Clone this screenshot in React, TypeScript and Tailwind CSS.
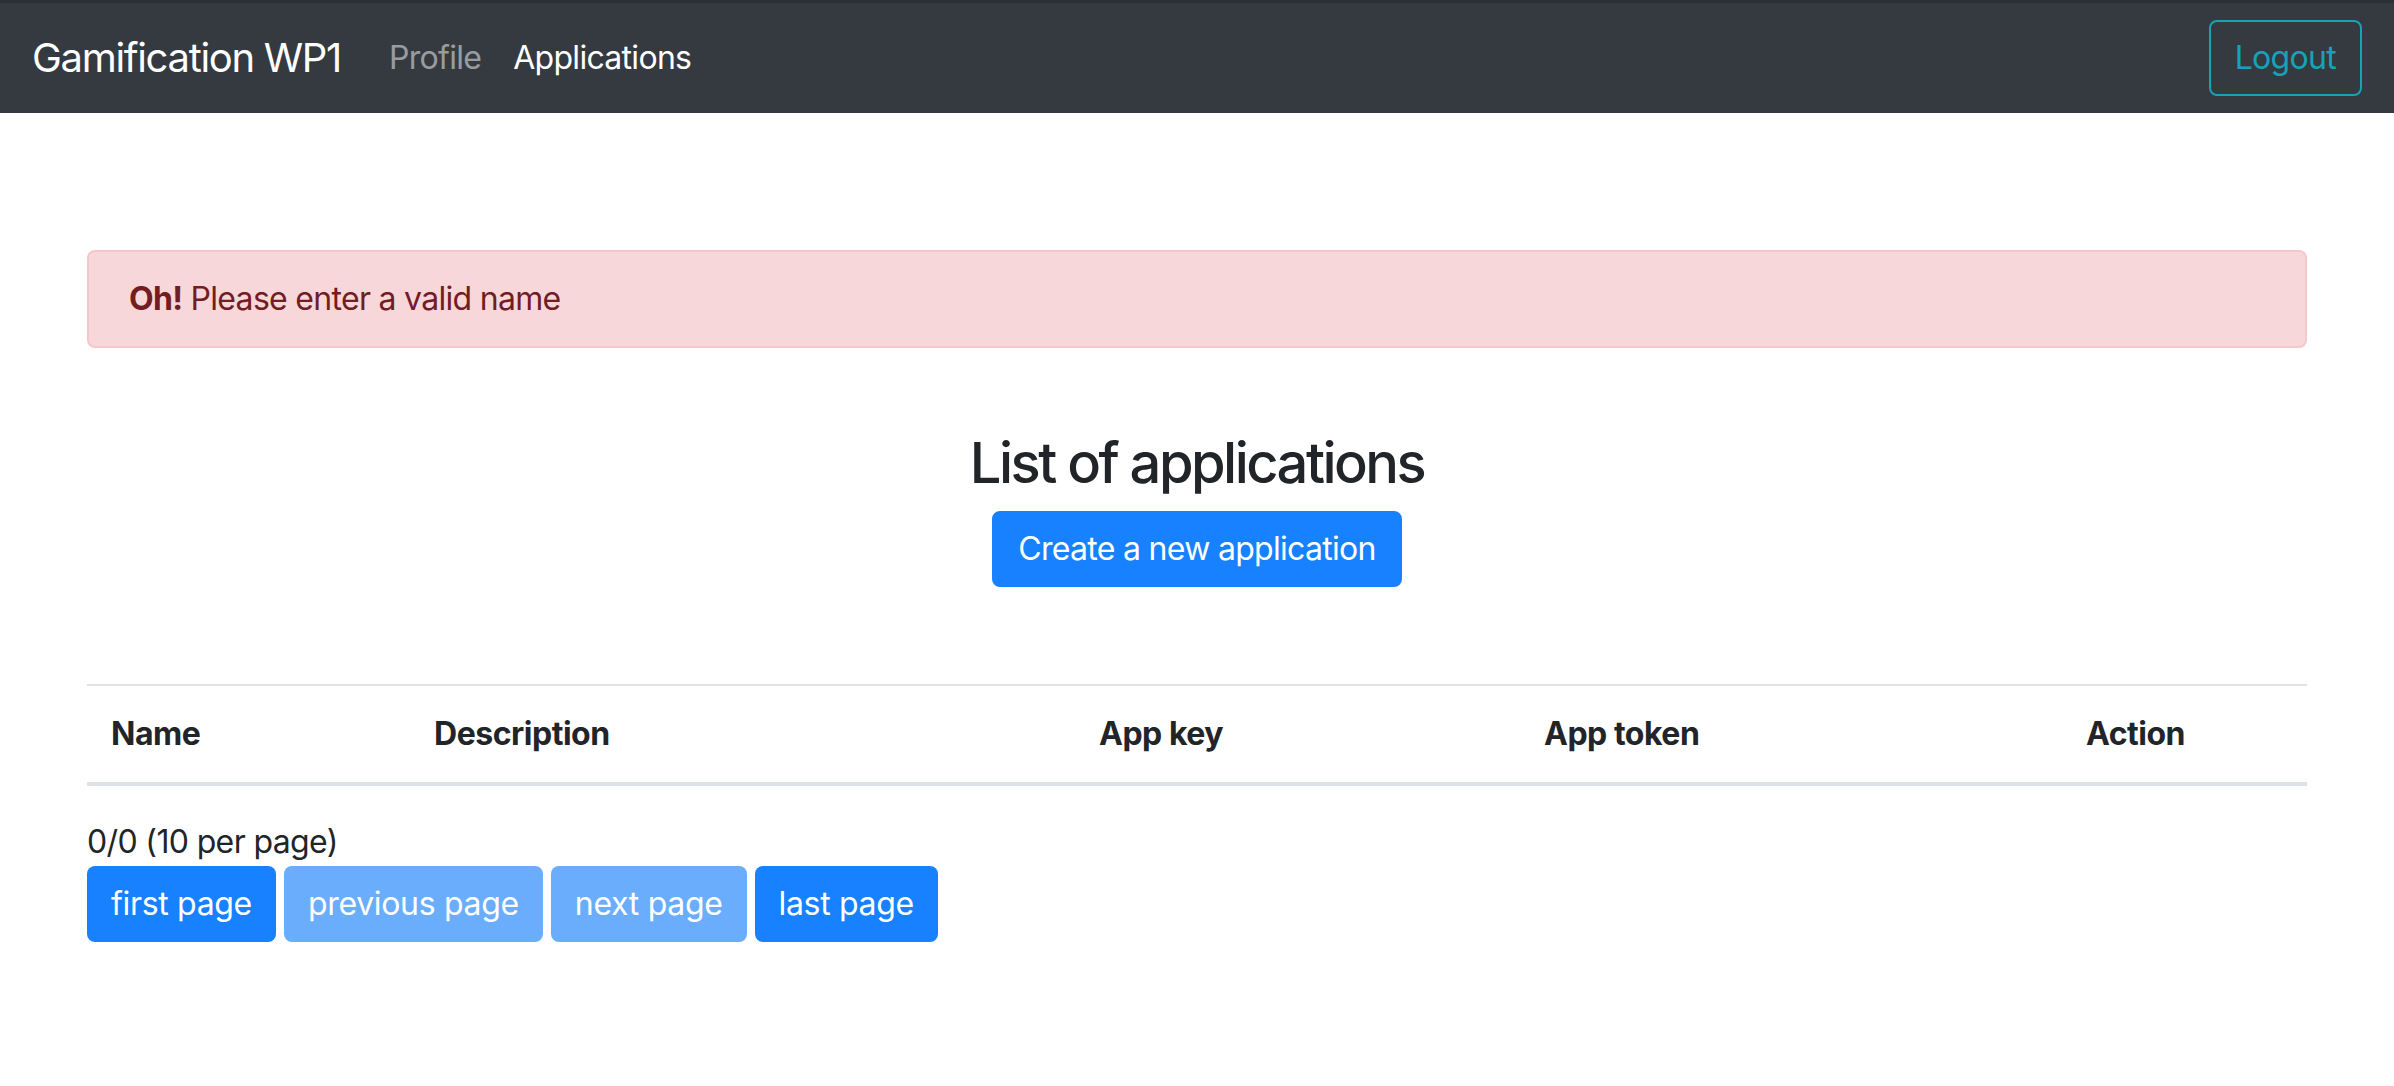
import React from "react";

export default function App() {
  const font = { fontFamily: "Inter, 'Noto Sans', sans-serif" };
  const btn = "h-[76px] rounded-[8px] px-[24px] text-[32px] leading-[48px] tracking-[-0.022em] text-white";
  const pbtn = "h-[76px] rounded-[8px] px-[24px] text-[32px] leading-[48px] tracking-[-0.01em] text-white";
  return (
    <div className="min-h-[1086px] bg-white text-[#212529]" style={font}>
      {/* Navbar */}
      <nav className="relative flex h-[113px] items-center bg-[#343a40] px-[32px] pt-[3px]">
        <div className="absolute left-0 right-0 top-0 h-[3px] bg-[#2b2f34]" />
        <a className="mr-[32px] py-[10px] text-[40px] leading-[60px] tracking-[-0.033em] text-white">Gamification WP1</a>
        <div className="flex items-center">
          <a className="px-[16px] text-[32px] leading-[48px] tracking-[-0.022em] text-white/50">Profile</a>
          <a className="px-[16px] text-[32px] leading-[48px] tracking-[-0.022em] text-white">Applications</a>
        </div>
        <div className="ml-auto">
          <button className="h-[76px] rounded-[8px] border-2 border-[#17a2b8] px-[24px] text-[32px] leading-[48px] tracking-[-0.022em] text-[#17a2b8]">
            Logout
          </button>
        </div>
      </nav>

      {/* Content */}
      <div className="mx-auto w-[2280px] px-[30px] pt-[137px]">
        <div className="flex h-[98px] items-center rounded-[8px] border-2 border-[#f5c6cb] bg-[#f8d7da] px-[40px] text-[32px] leading-[48px] tracking-[-0.022em] text-[#721c24]">
          <span>
            <strong className="font-bold">Oh!</strong> Please enter a valid name
          </span>
        </div>

        <div className="mt-[82px] flex flex-col items-center">
          <h3 className="mb-[14px] text-[56px] font-medium leading-[67px] tracking-[-0.045em]">List of applications</h3>
          <button className={`${btn} border-2 border-[#1881ff] bg-[#1881ff]`}>Create a new application</button>
        </div>

        <table className="mt-[97px] w-full table-fixed border-collapse text-[32px] leading-[48px] tracking-[-0.015em]">
          <thead>
            <tr className="border-t-2 border-b-4 border-[#dee2e6]">
              <th className="w-[323px] p-[24px] text-left font-bold">Name</th>
              <th className="w-[665px] p-[24px] text-left font-bold">Description</th>
              <th className="w-[445px] p-[24px] text-left font-bold">App key</th>
              <th className="w-[542px] p-[24px] text-left font-bold">App token</th>
              <th className="w-[245px] p-[24px] text-left font-bold">Action</th>
            </tr>
          </thead>
          <tbody></tbody>
        </table>

        <div className="mt-[32px] text-[32px] leading-[48px] tracking-[-0.02em]">0/0 (10 per page)</div>
        <div className="flex gap-[8px]">
          <button className={`${pbtn} bg-[#1881ff]`}>first page</button>
          <button className={`${pbtn} bg-[#69adfc]`}>previous page</button>
          <button className={`${pbtn} bg-[#69adfc]`}>next page</button>
          <button className={`${pbtn} bg-[#1881ff]`}>last page</button>
        </div>
      </div>
    </div>
  );
}
